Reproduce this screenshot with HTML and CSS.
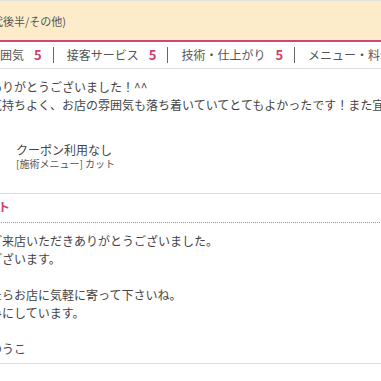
FILE: index.html
```html
<!DOCTYPE html>
<html lang="ja">
<head>
    <meta charset="UTF-8">
    <meta name="viewport" content="width=device-width, initial-scale=1.0">
    <title>口コミ</title>
    <link rel="stylesheet" href="styles.css">
</head>
<body>
    <div class="page">
        <div class="reviewer">代後半/その他)</div>
        <ul class="ratings">
            <li class="first">雰囲気<span class="score">5</span></li>
            <li>接客サービス<span class="score">5</span></li>
            <li>技術・仕上がり<span class="score">5</span></li>
            <li>メニュー・料金<span class="score">5</span></li>
        </ul>
        <div class="review-body">
            <p>ありがとうございました！^^</p>
            <p>気持ちよく、お店の雰囲気も落ち着いていてとてもよかったです！また宜しくお願いします。</p>
            <div class="coupon">
                <div class="coupon-name">クーポン利用なし</div>
                <div class="coupon-menu">[施術メニュー] カット</div>
            </div>
        </div>
        <div class="reply">
            <h3>サロンからのコメント</h3>
            <div class="reply-text">
                <p>ご来店いただきありがとうございました。</p>
                <p>ございます。</p>
                <p>&nbsp;</p>
                <p>たらお店に気軽に寄って下さいね。</p>
                <p>みにしています。</p>
                <p>&nbsp;</p>
                <p>ゆうこ</p>
            </div>
        </div>
    </div>
</body>
</html>
```

FILE: styles.css
```css
body {
    margin: 0;
    overflow: hidden;
    background: #fff;
    font-family: "Noto Sans CJK JP", "Noto Sans", sans-serif;
    color: #444;
}

.page {
    margin-left: -110px;
    width: 800px;
}

.reviewer {
    border-top: 1px solid #e2e2e2;
    background-color: #fdecc9;
    border-bottom: 2px solid #d0486f;
    padding: 11px 0 10px 102px;
    font-size: 11px;
    line-height: 18px;
    color: #555;
}

.ratings {
    list-style: none;
    margin: 0;
    padding: 0 0 0 98px;
    display: flex;
    align-items: center;
    height: 26px;
    border-bottom: 1px solid #ddd;
    font-size: 12px;
    color: #555;
    white-space: nowrap;
}

.ratings li {
    display: flex;
    align-items: center;
    padding: 0 11px 0 13px;
    border-left: 1px solid #666;
    line-height: 16px;
}

.ratings li.first {
    border-left: none;
    padding-left: 0;
}

.score {
    margin-left: 10px;
    font-size: 13px;
    font-weight: bold;
    color: #d0406a;
}

.review-body {
    padding: 9px 0 23px 100px;
    border-bottom: 1px solid #ddd;
    font-size: 12px;
    line-height: 18px;
    white-space: nowrap;
}

.review-body p {
    margin: 0;
}

.coupon {
    margin-top: 29px;
    padding-left: 26px;
}

.coupon-name {
    font-size: 12px;
    line-height: 14px;
}

.coupon-menu {
    font-size: 10px;
    line-height: 13px;
    color: #555;
}

.reply {
    border-bottom: 1px solid #ddd;
}

.reply h3 {
    margin: 0;
    padding: 4px 0 6px 0;
    font-size: 12px;
    line-height: 18px;
    color: #d0406a;
    border-bottom: 1px dotted #999;
}

.reply-text {
    padding: 9px 0 5px 100px;
    font-size: 12px;
    line-height: 18px;
    white-space: nowrap;
}

.reply-text p {
    margin: 0;
}
```
